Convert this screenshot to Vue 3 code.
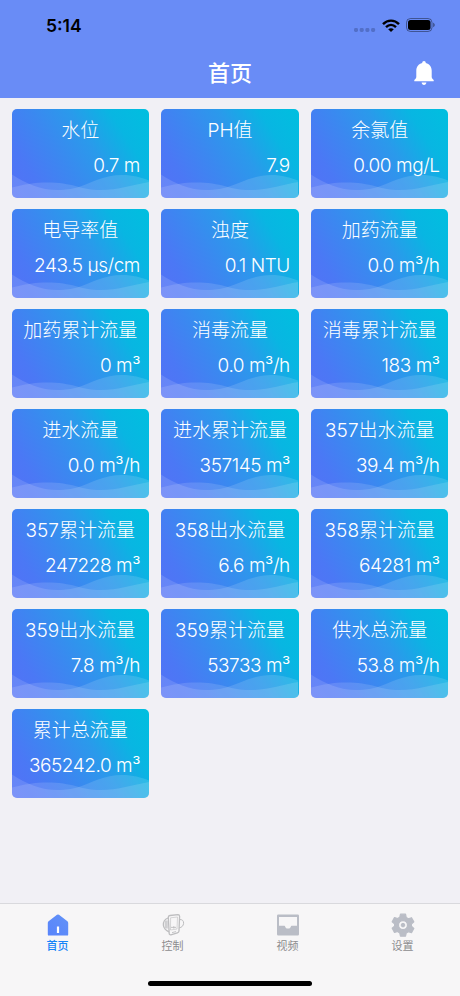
<script setup>
import { ref } from "vue";

const cards = [
  { title: "水位", value: "0.7 m" },
  { title: "PH值", value: "7.9" },
  { title: "余氯值", value: "0.00 mg/L" },
  { title: "电导率值", value: "243.5 μs/cm" },
  { title: "浊度", value: "0.1 NTU" },
  { title: "加药流量", value: "0.0 m³/h" },
  { title: "加药累计流量", value: "0 m³" },
  { title: "消毒流量", value: "0.0 m³/h" },
  { title: "消毒累计流量", value: "183 m³" },
  { title: "进水流量", value: "0.0 m³/h" },
  { title: "进水累计流量", value: "357145 m³" },
  { title: "357出水流量", value: "39.4 m³/h" },
  { title: "357累计流量", value: "247228 m³" },
  { title: "358出水流量", value: "6.6 m³/h" },
  { title: "358累计流量", value: "64281 m³" },
  { title: "359出水流量", value: "7.8 m³/h" },
  { title: "359累计流量", value: "53733 m³" },
  { title: "供水总流量", value: "53.8 m³/h" },
  { title: "累计总流量", value: "365242.0 m³" },
];

const tabs = [
  { id: "home", label: "首页" },
  { id: "control", label: "控制" },
  { id: "video", label: "视频" },
  { id: "settings", label: "设置" },
];
const active = ref("home");
</script>

<template>
  <div class="page">
    <header class="header">
      <div class="status">
        <span class="time">5:14</span>
        <div class="status-icons">
          <svg class="dots" width="22" height="4" viewBox="0 0 22 4">
            <rect v-for="n in 4" :key="n" :x="(n - 1) * 5.7" y="0" width="4" height="4" rx="1.4" />
          </svg>
          <svg width="18" height="13" viewBox="0 0 18 13" fill="none" stroke="#000" stroke-width="2.4">
            <path d="M1 5.1C5.6.4 12.4.4 17 5.1" />
            <path d="M4 8.2c3-2.9 7-2.9 10 0" />
            <path d="M6.2 10.3c1.7-1.5 3.9-1.5 5.6 0L9 13z" fill="#000" stroke="none" />
          </svg>
          <svg width="29" height="14" viewBox="0 0 29 14">
            <rect x=".5" y=".5" width="25.5" height="13" rx="4" fill="none" stroke="#000" stroke-opacity=".4" />
            <rect x="2" y="2" width="22.5" height="10" rx="2.5" />
            <path d="M27.2 4.8c2 .7 2 3.7 0 4.4z" fill-opacity=".45" />
          </svg>
        </div>
      </div>
      <div class="nav">
        <h1>首页</h1>
        <svg class="bell" width="20" height="25" viewBox="0 0 20 25" fill="#fff">
          <path d="M10 0c1.1 0 1.8.8 1.8 1.9 3.6.9 5.9 3.8 5.9 7.6v6.2c0 1.5.8 2.4 2 3.2v1.3H.3v-1.3c1.2-.8 2-1.7 2-3.2V9.500c0-3.800 2.300-6.700 5.900-7.600C8.200.8 8.900 0 10 0z" />
          <path d="M7.600 21.600h4.800c-.2 1.500-1.100 2.400-2.400 2.400s-2.200-.9-2.400-2.400z" />
        </svg>
      </div>
    </header>

    <main class="grid">
      <div v-for="card in cards" :key="card.title" class="card">
        <svg class="waves" viewBox="0 0 137 26" preserveAspectRatio="none">
          <path d="M0 2.500C15 12 28 18 46 18c8 0 13-1 19-2.500C79 11 92 3 110 3c11 0 19 2.500 27 5.500V26H0z" />
          <path d="M0 15.500c12-3 22-5 35-5 12 0 21 1.500 30 4 8 2 14 3.500 23 3.500 19 0 32-5 49-8v16H0z" />
        </svg>
        <div class="title">{{ card.title }}</div>
        <div class="value">{{ card.value }}</div>
      </div>
    </main>

    <footer class="footer">
      <nav class="tabbar">
        <button
          v-for="tab in tabs"
          :key="tab.id"
          class="tab"
          :class="{ active: active === tab.id }"
          @click="active = tab.id"
        >
          <svg v-if="tab.id === 'home'" width="24" height="24" viewBox="0 0 24 24">
            <defs>
              <linearGradient id="home-fill" x1="1" y1="0" x2="0" y2="1">
                <stop offset="0" stop-color="#6392f7" />
                <stop offset="1" stop-color="#5884fb" />
              </linearGradient>
            </defs>
            <path d="M11 1.800q1-.8 2 0l8.400 6.500q.8.700.8 1.700v11.400q0 1.200-1.200 1.200H3q-1.200 0-1.200-1.200V10q0-1 .8-1.700z" fill="url(#home-fill)" />
            <rect x="10.900" y="13.500" width="2.200" height="6.500" fill="#fff" />
          </svg>
          <svg v-else-if="tab.id === 'control'" width="24" height="24" viewBox="0 0 24 24" fill="none" stroke="#bdbdbf">
            <path d="M9 2.500 17 1.700q1.500 0 1.600 1.500l-.6 14.800q-.1 1.500-1.600 1.900l-6.500 1.900q-1.500.2-1.700-1.300L7.300 4.300q0-1.600 1.700-1.800z" stroke-width="1.300" />
            <path d="M9.600 4.800 16.500 4l-.5 12-6.500 1z" stroke-width=".6" />
            <path d="M7 5C4 6 2.200 9 2.400 12.300c.3 2.900 2.500 5.200 5.500 6.600" stroke-width="1.300" />
            <path d="M5.300 7.500v8" stroke-width="3" stroke="#cfcfd1" />
            <path d="M18.600 6.500c2.600-.2 4.200 1.400 4 3.800s-1.900 4.300-4.400 4.500" />
            <path d="M10 14.400h5M12.800 13.200v2.400M11 19.600l4-1" stroke-width=".9" />
          </svg>
          <svg v-else-if="tab.id === 'video'" width="24" height="24" viewBox="0 0 24 24" fill="#babdc6">
            <path fill-rule="evenodd" d="M2.200 1.600h19.600q1.200 0 1.200 1.200v18.400q0 1.200-1.200 1.200H2.200Q1 22.400 1 21.200V2.800q0-1.200 1.200-1.200zM3 4v8.700h5.400c.5 0 .6.400.8 1 .4 1.200 1.300 1.900 2.800 1.900s2.400-.7 2.800-1.900c.2-.6.300-1 .8-1H21V4z" />
          </svg>
          <svg v-else width="24" height="24" viewBox="0 0 24 24" fill="#babdc6" stroke="#babdc6" stroke-linejoin="round">
            <path stroke-width="1.200" fill-rule="evenodd" d="M9.500 1.200h5l.7 3.200 2.200 1.300 3.100-1 2.300 4.200-2.400 2.200v2.200l2.400 2.200-2.300 4.200-3.100-1-2.200 1.300-.7 3.200h-5l-.7-3.200L6.600 18.500l-3.100 1-2.300-4.200 2.400-2.200v-2.200L1.200 8.700l2.300-4.200 3.100 1 2.200-1.300zM12 7.600a4.500 4.500 0 1 0 0 9 4.500 4.500 0 0 0 0-9z" />
            <circle cx="12" cy="12.100" r="1.800" />
          </svg>
          <span>{{ tab.label }}</span>
        </button>
      </nav>
      <div class="home-indicator"></div>
    </footer>
  </div>
</template>

<style>
body {
  margin: 0;
}
</style>

<style scoped>
.page {
  display: flex;
  flex-direction: column;
  width: 460px;
  height: 996px;
  overflow: hidden;
  background: #f1f0f5;
  font-family: Inter, "Noto Sans CJK SC", sans-serif;
}
.header {
  height: 98px;
  flex: none;
  background: #698cf6;
}
.status {
  display: flex;
  align-items: center;
  justify-content: space-between;
  height: 50px;
  padding: 0 25px 0 46px;
}
.time {
  font-size: 17.5px;
  font-weight: 600;
  color: #000;
}
.status-icons {
  display: flex;
  align-items: center;
}
.status-icons svg + svg {
  margin-left: 6px;
}
.dots {
  fill: #526fc8;
  margin-top: 9px;
}
.nav {
  display: grid;
  grid-template-columns: 1fr auto 1fr;
  align-items: center;
  height: 46px;
}
h1 {
  grid-column: 2;
  margin: 0;
  font-size: 22px;
  font-weight: 500;
  line-height: 30px;
  color: #fff;
}
.bell {
  justify-self: end;
  margin-right: 26px;
}
.grid {
  flex: 1;
  display: grid;
  grid-template-columns: repeat(3, 137.2px);
  grid-auto-rows: 88.5px;
  justify-content: space-between;
  align-content: start;
  row-gap: 11.5px;
  padding: 11.3px 11.6px 0 11.6px;
}
.card {
  position: relative;
  display: flex;
  flex-direction: column;
  overflow: hidden;
  border-radius: 5px;
  background: linear-gradient(58deg, #5471f6 0%, #4b78f5 18%, #3b88f0 38%, #2a9aeb 58%, #08b6e2 79%, #00bfdf 100%);
  color: #fff;
  font-size: 19px;
  font-weight: 300;
}
.waves {
  position: absolute;
  left: 0;
  bottom: 0;
  width: 100%;
  height: 26px;
  fill: rgba(255, 255, 255, 0.13);
}
.title {
  position: relative;
  margin-top: 9px;
  line-height: 26px;
  text-align: center;
  white-space: nowrap;
}
.value {
  position: relative;
  margin-top: 7.5px;
  padding-right: 8.8px;
  line-height: 27px;
  font-weight: 350;
  letter-spacing: -0.45px;
  text-align: right;
  white-space: nowrap;
}
.footer {
  height: 92px;
  flex: none;
  border-top: 1px solid #d9d9dd;
  background: #f7f6f7;
}
.tabbar {
  display: grid;
  grid-template-columns: repeat(4, 1fr);
  height: 77px;
}
.tab {
  display: flex;
  flex-direction: column;
  align-items: center;
  padding: 9px 0 0;
  border: 0;
  background: none;
  font-family: inherit;
  font-size: 11px;
  line-height: 16px;
  color: #8c8c8e;
}
.tab span {
  margin-top: 1px;
}
.tab.active {
  color: #1684f8;
  font-weight: 500;
}
.home-indicator {
  width: 164px;
  height: 5px;
  margin: 0 auto;
  border-radius: 3px;
  background: #000;
}
</style>
